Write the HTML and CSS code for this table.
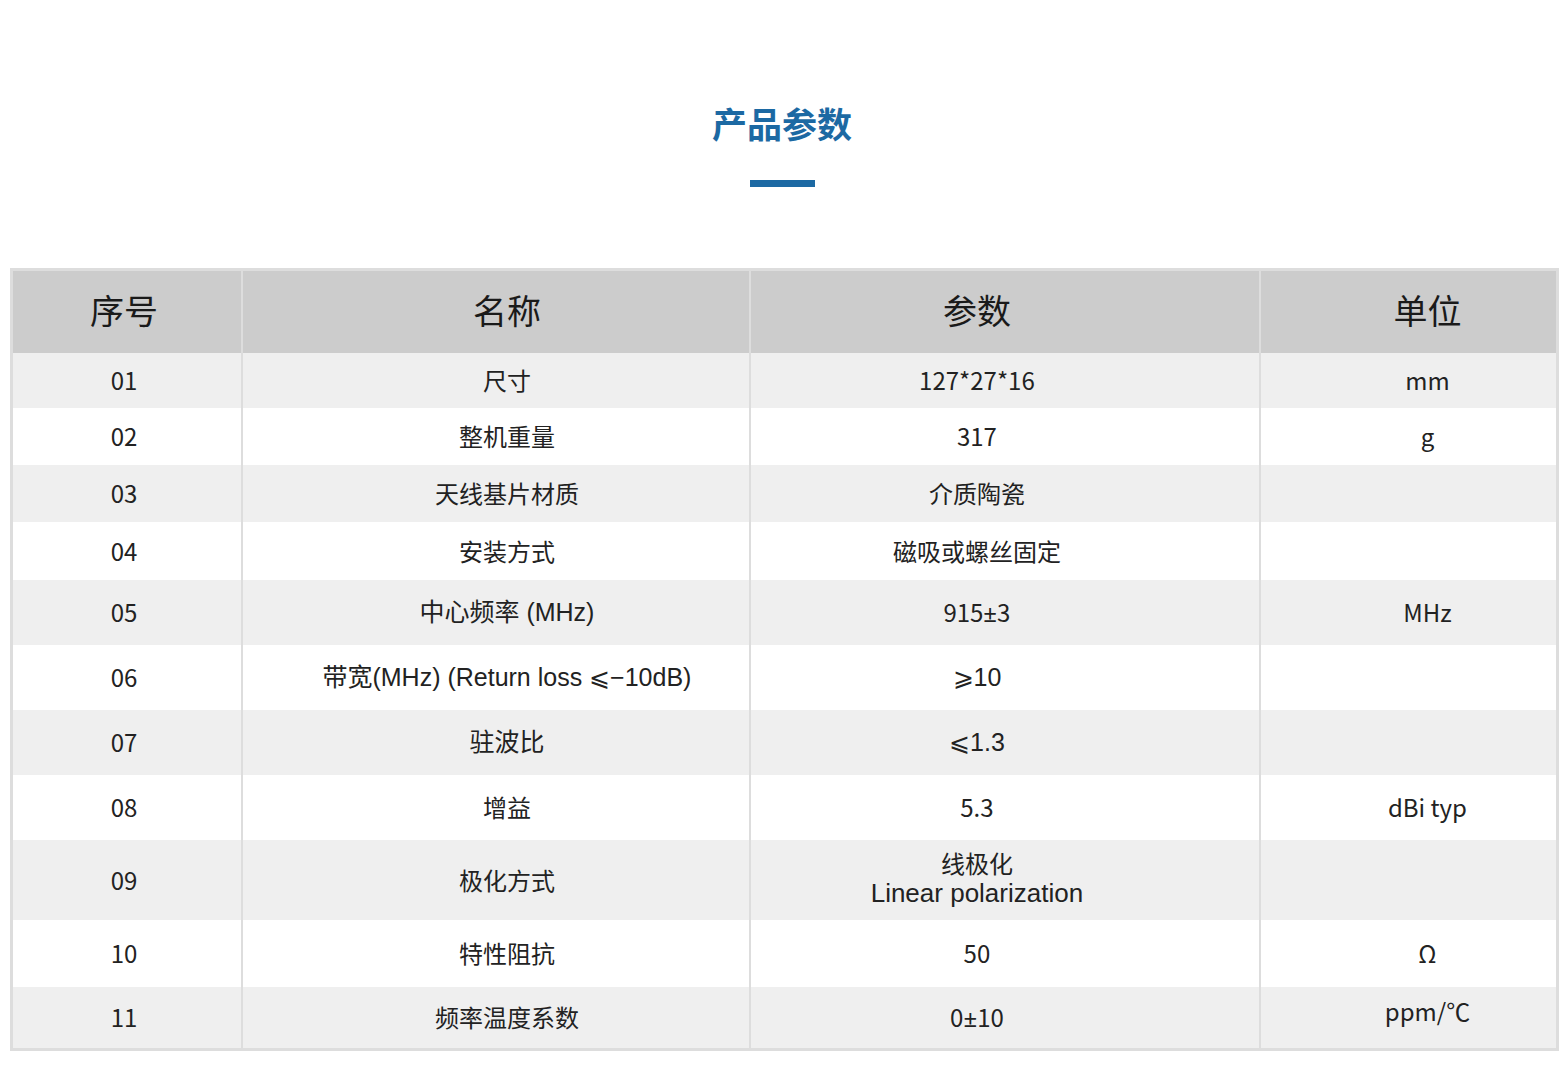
FILE: index.html
```html
<!DOCTYPE html>
<html lang="zh-CN">
<head>
<meta charset="utf-8">
<title>产品参数</title>
<link rel="stylesheet" href="styles.css">
</head>
<body>
<div class="page">
  <header class="heading">
    <h1 class="title">产品参数</h1>
    <div class="bar"></div>
  </header>
  <table class="spec">
    <colgroup>
      <col class="c1"><col class="c2"><col class="c3"><col class="c4">
    </colgroup>
    <thead>
      <tr><th>序号</th><th>名称</th><th>参数</th><th>单位</th></tr>
    </thead>
    <tbody>
      <tr><td>01</td><td>尺寸</td><td>127*27*16</td><td>mm</td></tr>
      <tr><td>02</td><td>整机重量</td><td>317</td><td>g</td></tr>
      <tr><td>03</td><td>天线基片材质</td><td>介质陶瓷</td><td></td></tr>
      <tr><td>04</td><td>安装方式</td><td>磁吸或螺丝固定</td><td></td></tr>
      <tr><td>05</td><td class="alt">中心频率 (MHz)</td><td>915<span class="pm">±</span>3</td><td>MHz</td></tr>
      <tr><td>06</td><td class="alt">带宽(MHz) (Return loss ⩽−10dB)</td><td class="alt">⩾10</td><td></td></tr>
      <tr><td>07</td><td class="alt">驻波比</td><td class="alt">⩽1.3</td><td></td></tr>
      <tr><td>08</td><td>增益</td><td>5.3</td><td>dBi typ</td></tr>
      <tr><td>09</td><td>极化方式</td><td class="alt two">线极化<br><span class="latin">Linear polarization</span></td><td></td></tr>
      <tr><td>10</td><td>特性阻抗</td><td>50</td><td>Ω</td></tr>
      <tr><td>11</td><td>频率温度系数</td><td>0<span class="pm">±</span>10</td><td><span class="raised">ppm/℃</span></td></tr>
    </tbody>
  </table>
</div>
</body>
</html>
```

FILE: styles.css
```css
html, body {
  margin: 0;
  padding: 0;
  background: #ffffff;
}
body {
  font-family: "Noto Sans CJK SC", "Noto Sans", sans-serif;
  color: #222222;
}
.page {
  padding: 0 5px 0 10px;
}
.heading {
  display: flex;
  flex-direction: column;
  align-items: center;
  padding-top: 98px;
  padding-right: 5px;
}
.title {
  margin: 0;
  font-size: 35px;
  line-height: 50px;
  font-weight: 700;
  color: #1c69a3;
}
.bar {
  flex: none;
  margin-top: 32px;
  width: 65px;
  height: 7px;
  background: #1c69a3;
}
.spec {
  margin-top: 81px;
  width: 1549px;
  border-collapse: collapse;
  border: 3px solid #dddddd;
  table-layout: fixed;
}
.c1 { width: 230px; }
.c2 { width: 507px; }
.c3 { width: 509px; }
.c4 { width: 297px; }
.spec th, .spec td {
  border-left: 2px solid #dddddd;
  text-align: center;
  vertical-align: middle;
  padding: 0;
}
.spec th:first-child, .spec td:first-child {
  border-left: none;
}
/* text in the reference sits slightly off the column centre */
.spec th:nth-child(1), .spec td:nth-child(1) { padding-right: 6px; }
.spec th:nth-child(2), .spec td:nth-child(2) { padding-left: 22px; }
.spec th:nth-child(3), .spec td:nth-child(3) { padding-right: 56px; }
.spec th:nth-child(4), .spec td:nth-child(4) { padding-left: 38px; }
.spec thead tr { height: 83px; }
.spec th {
  background: #cccccc;
  font-size: 34px;
  line-height: 44px;
  font-weight: 400;
  color: #1a1a1a;
  padding-bottom: 4px;
}
.spec td {
  font-size: 24px;
  line-height: 28px;
  color: #222222;
}
.spec tbody tr:nth-child(odd) td {
  background: #efefef;
}
.spec tbody tr:nth-child(1) { height: 55px; }
.spec tbody tr:nth-child(2) { height: 57px; }
.spec tbody tr:nth-child(3) { height: 57px; }
.spec tbody tr:nth-child(4) { height: 58px; }
.spec tbody tr:nth-child(5) { height: 65px; }
.spec tbody tr:nth-child(6) { height: 65px; }
.spec tbody tr:nth-child(7) { height: 65px; }
.spec tbody tr:nth-child(8) { height: 65px; }
.spec tbody tr:nth-child(9) { height: 80px; }
.spec tbody tr:nth-child(10) { height: 67px; }
.spec tbody tr:nth-child(11) { height: 63px; }
.spec td.alt {
  font-family: "Liberation Sans", "Noto Sans CJK SC", sans-serif;
  font-size: 25px;
  line-height: 28px;
}
.spec td.two {
  font-size: 24px;
}
.latin {
  font-size: 26px;
}
.pm {
  font-family: "Noto Sans", sans-serif;
}
.raised {
  display: inline-block;
  margin-bottom: 12px;
}
```
